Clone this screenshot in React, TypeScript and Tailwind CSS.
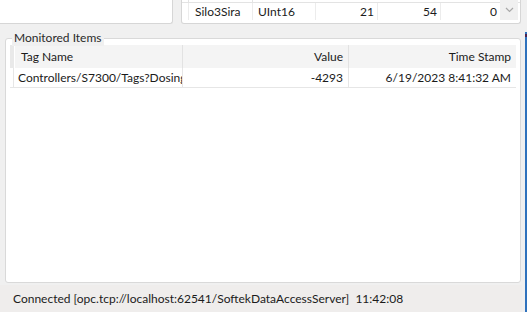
import React from "react";

export default function App() {
  return (
    <div
      className="relative w-[529px] h-[312px] overflow-hidden bg-[#f0f0f0] text-[12px] text-[#1b1b1b] flex flex-col"
      style={{ fontFamily: '"Segoe UI", Lato, "Noto Sans", sans-serif' }}
    >
      {/* top area */}
      <div className="flex h-[24px] shrink-0">
        <div className="w-[173px] h-[24px] bg-white border-r border-b border-[#d6d6d6] rounded-br-[3px]" />
        <div className="ml-[8px] w-[340px] h-[24px] bg-white border-l border-r border-b border-[#d6d6d6] rounded-b-[3px] flex flex-col">
          <div className="flex h-[3px] border-b border-[#e3e3e3]">
            <div className="w-[7px] border-r border-[#e3e3e3]" />
            <div className="w-[64px] border-r border-[#e3e3e3]" />
          </div>
          <div className="flex h-[17px] items-center leading-none">
            <div className="w-[7px] h-full border-r border-[#ececec]" />
            <div className="w-[64px] h-full border-r border-[#ececec] flex items-center pl-[6px]">Silo3Sira</div>
            <div className="w-[63px] h-full border-r border-[#ececec] flex items-center pl-[5px]">UInt16</div>
            <div className="w-[62px] h-full border-r border-[#ececec] flex items-center justify-end pr-[3px]">21</div>
            <div className="w-[63px] h-full border-r border-[#ececec] flex items-center justify-end pr-[3px]">54</div>
            <div className="w-[59px] h-full flex items-center justify-end pr-[3px]">0</div>
            <div className="w-[18px] h-[20px] -mt-[3px] bg-[#f0f0f0] flex items-center justify-center">
              <svg width="9" height="6" viewBox="0 0 9 6">
                <path d="M1 1 L4.5 4.5 L8 1" fill="none" stroke="#a8a8a8" strokeWidth="1.2" />
              </svg>
            </div>
          </div>
        </div>
      </div>

      {/* group box */}
      <div className="relative mt-[14px] ml-[5px] w-[516px] h-[245px] shrink-0 border border-[#d9d9d9] rounded-[3px] bg-white">
        <div className="absolute left-[6px] -top-[9px] px-[2px] bg-[#f0f0f0] leading-[16px] text-[#2a2a2a]">
          Monitored Items
        </div>
        <div className="absolute left-[6px] -top-[1px] h-[1px] w-[94px] bg-white hidden" />
        <div className="mt-[6px] ml-[4px] w-[506px] flex flex-col">
          {/* header */}
          <div className="flex h-[23px] bg-[#f4f4f4] leading-none">
            <div className="w-[5px] h-full bg-[#e9e9e9] border-r border-white" />
            <div className="w-[168px] h-full border-r border-[#e2e2e2] flex items-center pl-[6px]">Tag Name</div>
            <div className="w-[166px] h-full border-r border-[#e2e2e2] flex items-center justify-end pr-[5px]">Value</div>
            <div className="flex-1 h-full flex items-center justify-end pr-[5px]">Time Stamp</div>
          </div>
          {/* row */}
          <div className="flex h-[20px] leading-none border-b border-[#e6e6e6]">
            <div className="w-[4px] h-full border-r border-[#e6e6e6]" />
            <div className="w-[169px] h-full border-r border-[#e6e6e6] flex items-center pl-[4px] overflow-hidden whitespace-nowrap">
              Controllers/S7300/Tags?Dosing
            </div>
            <div className="w-[166px] h-full border-r border-[#e6e6e6] flex items-center justify-end pr-[5px]">-4293</div>
            <div className="flex-1 h-full flex items-center justify-end pr-[5px]">6/19/2023 8:41:32 AM</div>
          </div>
        </div>
      </div>

      {/* status bar */}
      <div className="mt-[2px] w-[522px] flex-1 bg-[#efedec] flex items-center pl-[13px] text-[#1b1b1b]">
        Connected [opc.tcp://localhost:62541/SoftekDataAccessServer]&nbsp;&nbsp;11:42:08
      </div>

      {/* window edge overlay */}
      <div className="absolute left-[525px] top-[32px] bottom-0 w-[2px] bg-[#2f72bd]" />
      <div className="absolute left-[525px] top-[34px] w-[2px] h-[3px] bg-[#4a2250]" />
      <div className="absolute left-[527px] top-0 bottom-0 w-[2px] bg-white" />
    </div>
  );
}
